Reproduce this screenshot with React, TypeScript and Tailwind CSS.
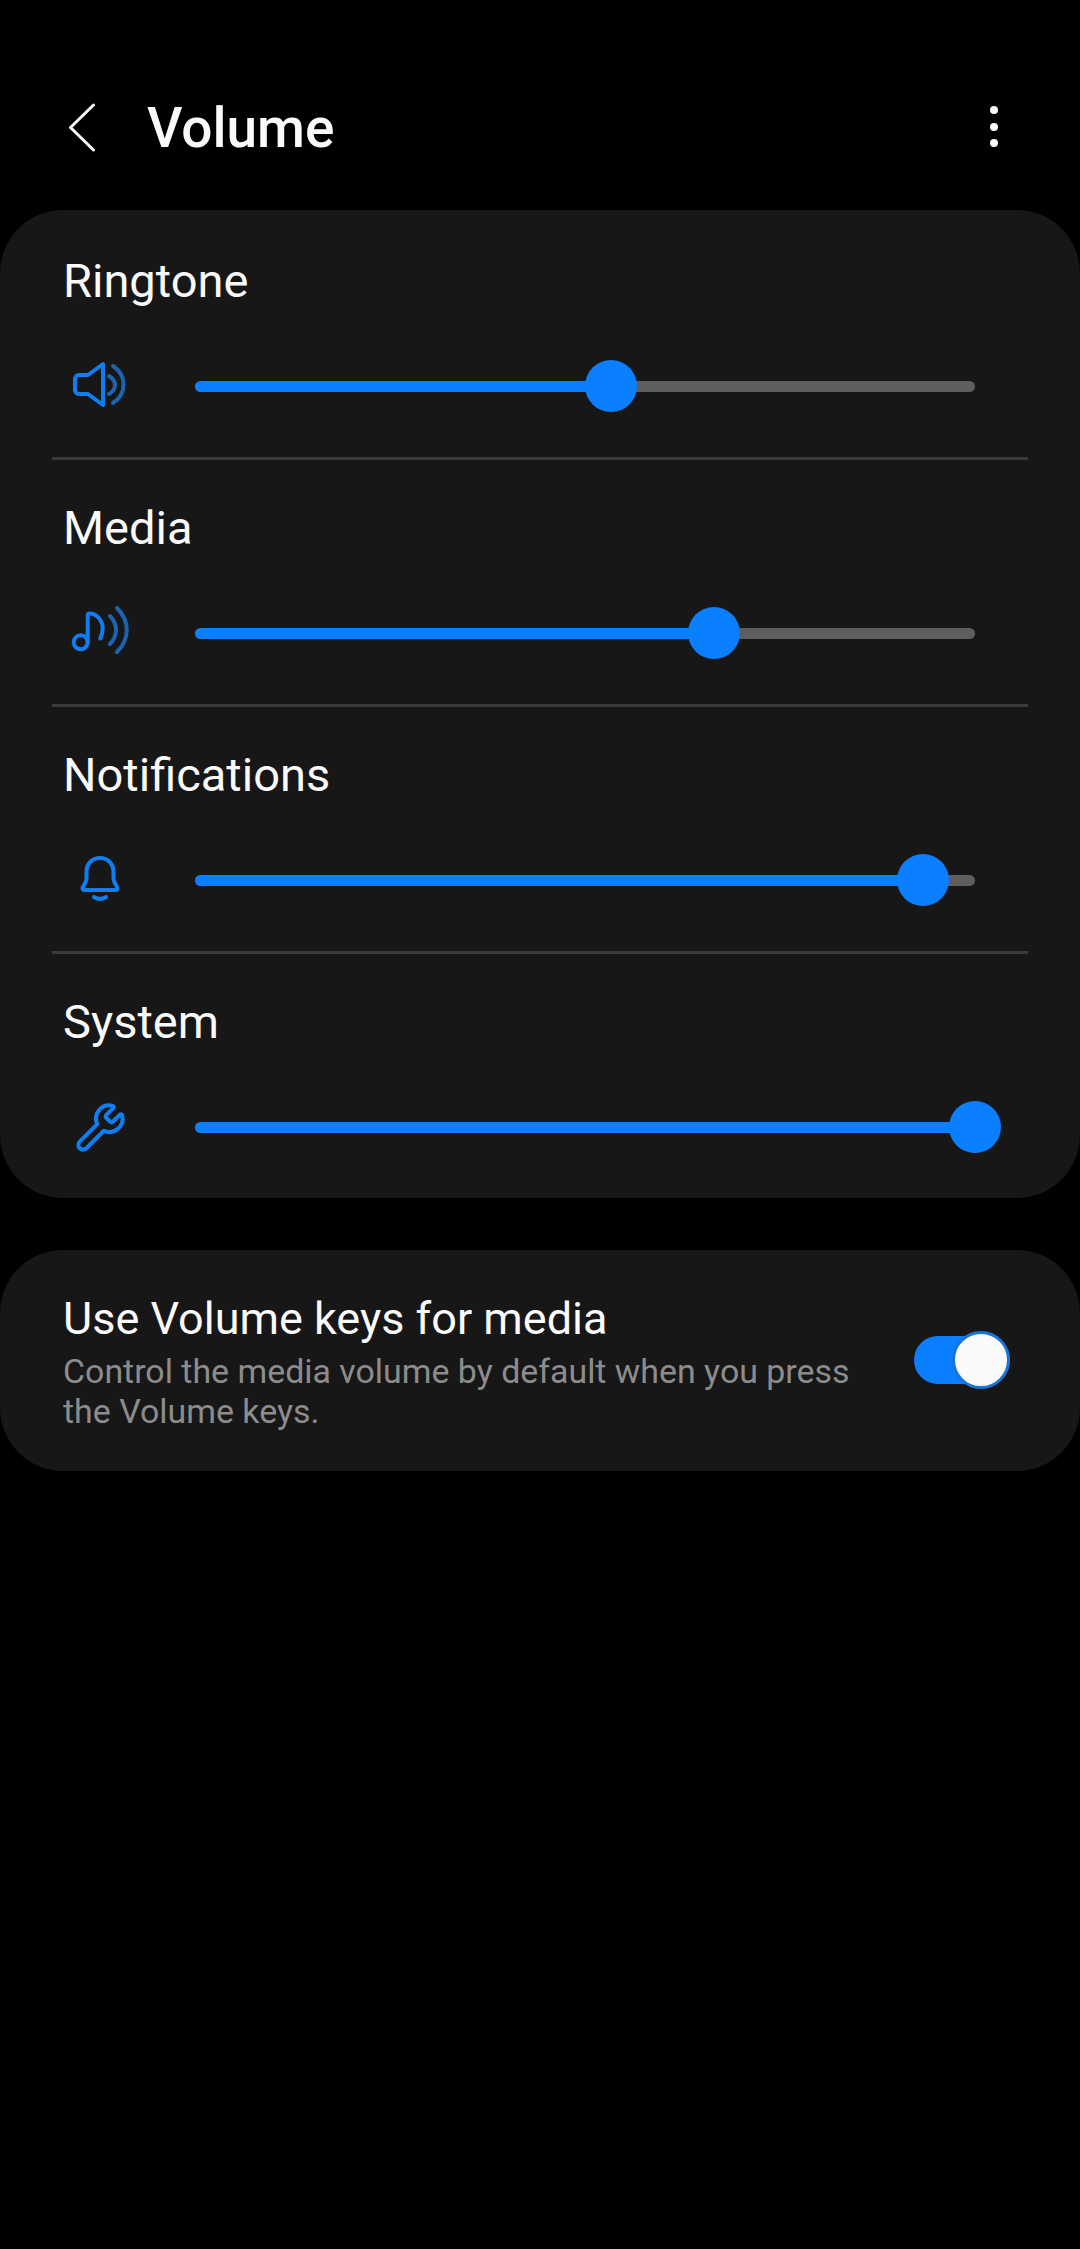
import type { ReactNode } from "react";
import { Wrench } from "lucide-react";

const FONT = "font-['Roboto','Liberation_Sans',sans-serif]";

function SpeakerIcon() {
  return (
    <svg viewBox="0 0 64 64" className="w-16 h-16" fill="none" strokeLinecap="round" strokeLinejoin="round" strokeWidth="4">
      <path d="M35 10 20 21H11a4 4 0 0 0-4 4v11a4 4 0 0 0 4 4h9l15 11Z" stroke="#0f7ef0" />
      <path d="M41 22c8 5 8 13 0 18M45 12c14 9 14 28 0 37" stroke="#1d64b0" />
    </svg>
  );
}

function MusicIcon() {
  return (
    <svg viewBox="0 0 64 64" className="w-16 h-16" fill="none" strokeLinecap="round" strokeLinejoin="round" strokeWidth="4">
      <circle cx="12.700" cy="41.300" r="7" stroke="#0f7ef0" />
      <path d="M19.700 41V14c0-1 1-1.500 2-1.500 7 0 13 7 13 15 0 4-1 7-2.500 10" stroke="#0f7ef0" />
      <path d="M42 15c8 8 8 20 0 28M49 7c13 13 13 31 0 44" stroke="#1d64b0" />
    </svg>
  );
}

function BellIcon() {
  return (
    <svg viewBox="0 0 64 64" className="w-16 h-16" fill="none" stroke="#0f7ef0" strokeLinecap="round" strokeLinejoin="round" strokeWidth="4">
      <path d="M32 10c-8 0-13.500 6-13.500 14v6c0 5-3 7-4 10-.5 1.500.5 2 2 2h31c1.500 0 2.500-.5 2-2-1-3-4-5-4-10v-6c0-8-5.500-14-13.500-14Z" />
      <path d="M26 49c4 2.500 8 2.500 12 0" />
    </svg>
  );
}

function WrenchIcon() {
  return (
    <div className="w-16 h-16 flex items-center justify-center text-[#0f7ef0]">
      <Wrench size={53} strokeWidth={1.85} />
    </div>
  );
}

interface VolumeRowProps {
  label: string;
  value: number;
  icon: ReactNode;
  last?: boolean;
}

function VolumeRow({ label, value, icon, last }: VolumeRowProps) {
  return (
    <>
      <div className="h-[244px] pt-[38px]">
        <div className="pl-[63px] text-[47px] leading-[60px] text-[#fafafa]">{label}</div>
        <div className="mt-[43px] pl-[68px] flex items-center">
          {icon}
          {/* track */}
          <div className="ml-[63px] w-[780px] h-[52px] relative flex items-center">
            <div className="w-full h-[11px] rounded-full bg-[#5e5e5e] overflow-hidden">
              <div className="h-full rounded-full bg-[#0a7fff]" style={{ width: `${value}%` }} />
            </div>
            <div
              className="absolute top-0 -ml-[26px] w-[52px] h-[52px] rounded-full bg-[#0a7fff]"
              style={{ left: `${value}%` }}
            />
          </div>
        </div>
      </div>
      {!last && <div className="h-[3px] mx-[52px] bg-[#3b3b3b]" />}
    </>
  );
}

const rows = [
  { label: "Ringtone", value: 53.3, icon: <SpeakerIcon /> },
  { label: "Media", value: 66.6, icon: <MusicIcon /> },
  { label: "Notifications", value: 93.3, icon: <BellIcon /> },
  { label: "System", value: 100, icon: <WrenchIcon /> },
];

export default function App() {
  return (
    <div className={`${FONT} bg-black min-h-screen w-[1080px] overflow-hidden`}>
      {/* Header */}
      <div className="h-[210px] pt-[98px] pl-[69px] pr-[82px] flex items-start">
        <div className="h-[60px] flex items-center">
          <svg viewBox="0 0 26 50" className="w-[26px] h-[50px]" fill="none" stroke="#fafafa" strokeWidth="3" strokeLinecap="round" strokeLinejoin="round">
            <path d="M24.500 2 1.500 24.500 24.500 47" />
          </svg>
        </div>
        <div className="ml-[52px] text-[55px] leading-[60px] font-medium text-[#fafafa]">Volume</div>
        <div className="ml-auto h-[57px] flex flex-col items-center justify-center gap-[8.5px]">
          <div className="w-2 h-2 rounded-full bg-[#fafafa]" />
          <div className="w-2 h-2 rounded-full bg-[#fafafa]" />
          <div className="w-2 h-2 rounded-full bg-[#fafafa]" />
        </div>
      </div>

      {/* Sliders */}
      <div className="bg-[#171717] rounded-[63px] pt-[3px]">
        {rows.map((row, index) => (
          <VolumeRow key={row.label} {...row} last={index === rows.length - 1} />
        ))}
      </div>

      {/* Volume keys toggle */}
      <div className="mt-[52px] h-[221px] bg-[#171717] rounded-[63px] pl-[63px] pt-[43px] flex items-start">
        <div className="w-[851px]">
          <div className="text-[45px] leading-[52px] text-[#fafafa]">Use Volume keys for media</div>
          <div className="mt-[7px] w-[820px] text-[33.9px] leading-[40px] text-[#8c8c8c]">
            Control the media volume by default when you press the Volume keys.
          </div>
        </div>
        <div className="mt-[43px] relative w-[96px] h-[48px] rounded-full bg-[#0a7fff]">
          <div className="absolute -top-[5px] left-[38px] w-[58px] h-[58px] rounded-full bg-[#fafafa] border-[3px] border-[#1a74d6]" />
        </div>
      </div>
    </div>
  );
}
